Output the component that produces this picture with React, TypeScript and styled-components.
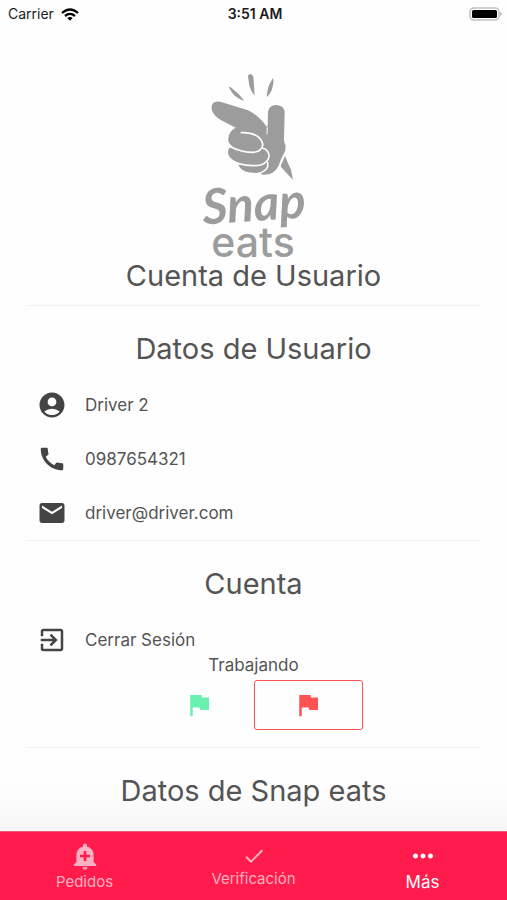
import React from "react";
import styled, { createGlobalStyle } from "styled-components";
import {
  MdAccountCircle,
  MdAddAlert,
  MdCall,
  MdCheck,
  MdEmail,
  MdExitToApp,
  MdFlag,
  MdMoreHoriz,
} from "react-icons/md";

const GlobalStyle = createGlobalStyle`
  * { box-sizing: border-box; }
  body {
    margin: 0;
    background: #fefefe;
    color: #545454;
    font-family: Inter, "Liberation Sans", sans-serif;
  }
`;

const Screen = styled.div`
  display: flex;
  flex-direction: column;
  height: 100vh;
  overflow: hidden;
`;

const StatusBar = styled.header`
  display: grid;
  grid-template-columns: 1fr auto 1fr;
  align-items: center;
  flex: none;
  height: 28px;
  padding: 0 5px 0 8px;
  color: #1c1c1c;
  font-size: 14px;
  line-height: 20px;
`;

const Carrier = styled.span`
  display: flex;
  align-items: center;
  gap: 7px;
`;

const Clock = styled.time`
  font-weight: 600;
`;

const Battery = styled.svg`
  justify-self: end;
`;

const Content = styled.main`
  flex: 1;
  min-height: 0;
  overflow: hidden;
  padding: 42px 26px 0;
  background: linear-gradient(to top, #f7f7f7, #fefefe 48px);
`;

const Logo = styled.svg`
  display: block;
  margin: 0 auto;
  overflow: visible;
  fill: #9c9c9c;
`;

const ScriptWord = styled.text`
  font: italic 700 49px Lato, sans-serif;
  text-anchor: middle;
`;

const PlainWord = styled.text`
  font: 500 41px Inter, sans-serif;
  text-anchor: middle;
`;

const Section = styled.section`
  border-bottom: 1px solid #f2f2f2;
  padding-top: 25px;

  &:first-of-type {
    padding-top: 0;
  }
  &:last-of-type {
    border-bottom: 0;
  }
`;

const Title = styled.h2`
  margin: 0;
  padding-bottom: 11px;
  font-size: 29px;
  font-weight: 400;
  line-height: 36px;
  text-align: center;
`;

const List = styled.ul`
  list-style: none;
  margin: 0;
  padding: 0;
`;

const Row = styled.li`
  display: flex;
  align-items: center;
  gap: 18px;
  height: 54px;
  padding-left: 11px;
  font-size: 17px;

  svg {
    flex: none;
    color: #444;
  }
`;

const RowButton = styled.button`
  display: flex;
  align-items: center;
  gap: 18px;
  width: 100%;
  height: 30px;
  margin-top: 12px;
  border: 0;
  padding: 0 0 0 11px;
  background: none;
  color: inherit;
  font: inherit;
  font-size: 17px;

  svg {
    color: #444;
  }
`;

const Status = styled.p`
  margin: 0;
  font-size: 17px;
  line-height: 20px;
  text-align: center;
`;

const Toggle = styled.div`
  display: flex;
  justify-content: center;
  padding: 5px 0 17px;
`;

const FlagButton = styled.button<{ $color: string; $active?: boolean }>`
  display: flex;
  align-items: center;
  justify-content: center;
  width: 109px;
  height: 50px;
  border: 1px solid ${(p) => (p.$active ? p.$color : "transparent")};
  border-radius: 3px;
  padding: 0;
  background: transparent;
  color: ${(p) => p.$color};
`;

const TabBar = styled.nav`
  display: grid;
  grid-template-columns: repeat(3, 1fr);
  flex: none;
  height: 69px;
  border-top: 1px solid #e85b78;
  background: #ff1c4c;
`;

const Tab = styled.button<{ $active?: boolean }>`
  display: flex;
  flex-direction: column;
  align-items: center;
  justify-content: center;
  border: 0;
  padding: 1px 0 0;
  background: none;
  color: ${(p) => (p.$active ? "#fff" : "#ffb0c2")};
  font: inherit;
  font-size: ${(p) => (p.$active ? 17 : 15)}px;
  line-height: 22px;
`;

export default function App() {
  return (
    <Screen>
      <GlobalStyle />
      <StatusBar>
        <Carrier>
          Carrier
          <svg width="18" height="13" viewBox="0 0 18 13" fill="none" stroke="#000" strokeWidth="2.3" aria-hidden="true">
            <path d="M1 5 Q9 -2 17 5" />
            <path d="M4 8 Q9 3.8 14 8" />
            <path d="M6.3 10 Q9 7.8 11.7 10 L9 12.8Z" fill="#000" stroke="none" />
          </svg>
        </Carrier>
        <Clock>3:51 AM</Clock>
        <Battery width="33" height="15" viewBox="0 0 33 15" aria-hidden="true">
          <rect x="1" y="1" width="29" height="12" rx="4" fill="#fff" stroke="#c2c2c2" strokeWidth="1.6" />
          <rect x="3" y="3" width="25" height="8" rx="1.5" fill="#000" />
          <path d="M31.5 5 Q33.5 7 31.5 9Z" fill="#777" />
        </Battery>
      </StatusBar>

      <Content>
        <Logo width="110" height="188" viewBox="0 0 110 188" role="img" aria-label="Snap eats">
          <g transform="translate(-9 -10) scale(.33333)">
            <path d="M116 81 Q118 78 126 85 L148 104 L163 123 Q145 116 134 107 Q124 97 116 81Z" />
            <path d="M174 49 Q177 39 184 43 Q190 47 191 60 L194 107 Q181 91 178 77Z" />
            <path d="M248 55 Q252 58 250 67 Q248 86 243 95 L231 112 Q230 90 239 72Z" />
            <path d="M65 137 C68 126 82 121 96 127 L174 151 Q207 166 230 200 L233 198 L234 155 Q238 135 258 135 Q279 135 284 154 L282 240 Q283 250 287 257 Q288 273 279 286 L272 300 L266 317 Q251 346 218 344 L211 340 L175 337 Q153 333 146 316 L148 309 Q125 300 117 288 Q110 272 119 263 Q128 262 128 259 Q113 250 115 235 Q116 214 137 203 L94 181 Q68 166 65 148Z" />
            <g fill="none" stroke="#fefefe" strokeWidth="5" strokeLinecap="round" strokeLinejoin="round">
              <path d="M154 218 Q185 217 204 230 Q219 243 218 256 Q214 275 190 277 Q155 277 121 260" />
              <path d="M217 264 Q238 270 237 290 Q233 309 212 315 Q180 320 146 311" />
              <path d="M232 203 L231 222" strokeWidth="3" />
              <path d="M233 308 Q235 324 226 330 Q218 338 204 340" />
            </g>
            <path d="M285 288 Q288 293 292 305 L303 329 L309 359 Q290 341 274 322 Q270 319 276 309Z" />
          </g>
          <ScriptWord x="56" y="151" transform="rotate(-4 56 151)">Snap</ScriptWord>
          <PlainWord x="54" y="187">eats</PlainWord>
        </Logo>

        <Section>
          <Title>Cuenta de Usuario</Title>
        </Section>

        <Section>
          <Title>Datos de Usuario</Title>
          <List>
            <Row><MdAccountCircle size={30} />Driver 2</Row>
            <Row><MdCall size={30} />0987654321</Row>
            <Row><MdEmail size={30} />driver@driver.com</Row>
          </List>
        </Section>

        <Section>
          <Title>Cuenta</Title>
          <RowButton type="button"><MdExitToApp size={30} />Cerrar Sesión</RowButton>
          <Status>Trabajando</Status>
          <Toggle>
            <FlagButton type="button" $color="#69f0ae" aria-label="Activar"><MdFlag size={30} /></FlagButton>
            <FlagButton type="button" $color="#ff5252" $active aria-label="Desactivar"><MdFlag size={30} /></FlagButton>
          </Toggle>
        </Section>

        <Section>
          <Title>Datos de Snap eats</Title>
        </Section>
      </Content>

      <TabBar>
        <Tab type="button"><MdAddAlert size={30} />Pedidos</Tab>
        <Tab type="button"><MdCheck size={24} />Verificación</Tab>
        <Tab type="button" $active aria-current="page"><MdMoreHoriz size={30} />Más</Tab>
      </TabBar>
    </Screen>
  );
}
